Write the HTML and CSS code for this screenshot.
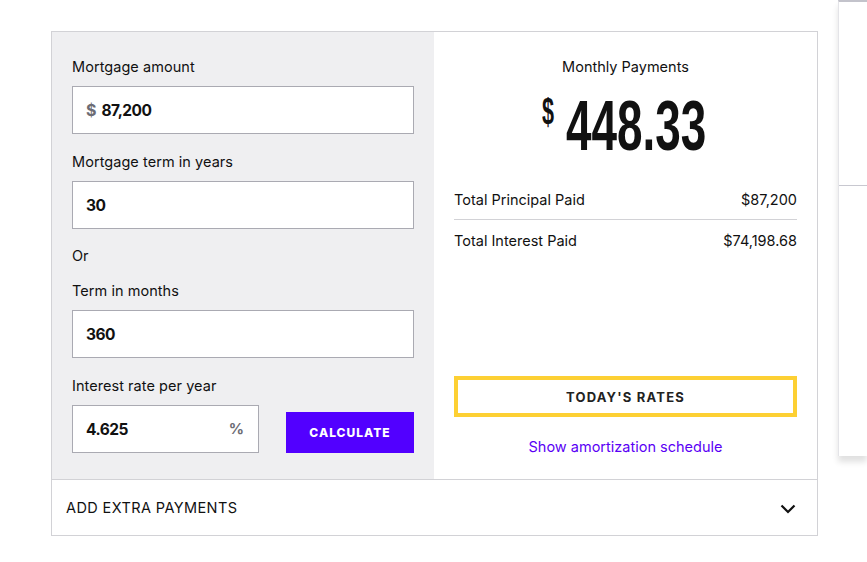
FILE: index.html
```html
<!DOCTYPE html>
<html>
<head>
<meta charset="utf-8">
<link rel="stylesheet" href="styles.css">
</head>
<body>
<div class="page">
  <div class="calc">
    <div class="calc-main">
      <div class="inputs">
        <label class="lbl">Mortgage amount</label>
        <div class="field"><span class="prefix">$</span><span class="val">87,200</span></div>
        <label class="lbl">Mortgage term in years</label>
        <div class="field"><span class="val">30</span></div>
        <div class="or">Or</div>
        <label class="lbl">Term in months</label>
        <div class="field"><span class="val">360</span></div>
        <label class="lbl">Interest rate per year</label>
        <div class="rate-row">
          <div class="field rate"><span class="val">4.625</span><span class="suffix">%</span></div>
          <button class="btn-calc">CALCULATE</button>
        </div>
      </div>
      <div class="results">
        <div class="mp-title">Monthly Payments</div>
        <div class="mp-amount"><span class="cur">$</span><span class="num">448.33</span></div>
        <div class="row"><span>Total Principal Paid</span><span>$87,200</span></div>
        <div class="row last"><span>Total Interest Paid</span><span>$74,198.68</span></div>
        <div class="spacer"></div>
        <button class="btn-rates">TODAY'S RATES</button>
        <a class="amort">Show amortization schedule</a>
      </div>
    </div>
    <div class="extra">
      <span>ADD EXTRA PAYMENTS</span>
      <svg class="chev" width="16" height="10" viewBox="0 0 16 10"><path d="M1.5 1.5 L8 8 L14.5 1.5" fill="none" stroke="#111" stroke-width="2.2"/></svg>
    </div>
  </div>
  <div class="side">
    <div class="side-top"></div>
    <div class="side-bottom"></div>
  </div>
</div>
</body>
</html>
```

FILE: styles.css
```css
* { box-sizing: border-box; }
html, body { margin: 0; padding: 0; background: #fff; }
body {
  font-family: "Inter", "Liberation Sans", sans-serif;
  color: #111;
  overflow: hidden;
  width: 867px;
  height: 562px;
}
.page {
  display: flex;
  align-items: flex-start;
  padding: 31px 0 0 51px;
}
.calc {
  width: 767px;
  flex: none;
  border: 1px solid #d2d2d6;
}
.calc-main {
  display: flex;
}
.inputs {
  width: 382px;
  background: #efeff1;
  padding: 25px 20px 26px 20px;
  display: flex;
  flex-direction: column;
}
.lbl {
  font-size: 14.5px;
  line-height: 20px;
  height: 20px;
  margin-bottom: 9px;
  letter-spacing: 0.05px;
}
.field {
  height: 48px;
  background: #fff;
  border: 1px solid #aaaab2;
  display: flex;
  align-items: center;
  padding: 0 13px;
  margin-bottom: 18px;
}
.prefix {
  color: #6c6c74;
  font-weight: 700;
  font-size: 16px;
  margin-right: 5px;
}
.val {
  font-weight: 700;
  font-size: 15.5px;
  letter-spacing: -0.5px;
}
.or {
  font-size: 14.5px;
  line-height: 20px;
  margin-top: -1px;
  margin-bottom: 15px;
}
.rate-row {
  display: flex;
  align-items: flex-end;
  justify-content: space-between;
}
.field.rate {
  width: 187px;
  margin-bottom: 0;
  justify-content: space-between;
}
.suffix {
  color: #6c6c74;
  font-weight: 700;
  font-size: 15px;
  margin-top: -2px;
  margin-right: 1px;
}
.btn-calc {
  width: 128px;
  height: 41px;
  background: #5200ff;
  border: none;
  color: #fff;
  font-family: inherit;
  font-weight: 800;
  font-size: 12px;
  letter-spacing: 1px;
  padding: 0;
}
.results {
  width: 383px;
  padding: 25px 20px 22px 20px;
  display: flex;
  flex-direction: column;
}
.mp-title {
  text-align: center;
  font-size: 14.5px;
  line-height: 20px;
}
.mp-amount {
  display: flex;
  justify-content: center;
  align-items: flex-start;
  height: 103px;
  padding-top: 16px;
  padding-right: 3px;
}
.cur {
  font-family: "Liberation Sans", sans-serif;
  font-weight: 700;
  font-size: 36px;
  line-height: 40px;
  display: inline-block;
  width: 12px;
  transform: scaleX(0.6);
  transform-origin: left center;
  margin-right: 12px;
  margin-top: -1px;
}
.num {
  font-family: "Liberation Sans", sans-serif;
  font-weight: 700;
  font-size: 70px;
  line-height: 66px;
  display: inline-block;
  transform: scaleX(0.655);
  transform-origin: left center;
  width: 141px;
  white-space: nowrap;
  letter-spacing: 0;
}
.row {
  display: flex;
  justify-content: space-between;
  font-size: 14.5px;
  line-height: 20px;
  padding: 10px 0 9px;
  border-bottom: 1px solid #d2d2d6;
}
.row.last {
  border-bottom: none;
  padding-top: 11px;
}
.spacer { flex: 1; }
.btn-rates {
  height: 41px;
  background: #fff;
  border: 4px solid #fdd033;
  font-family: inherit;
  font-weight: 700;
  font-size: 13px;
  letter-spacing: 1.2px;
  color: #222;
  padding: 0;
}
.amort {
  text-align: center;
  color: #5a00f5;
  font-size: 14.5px;
  line-height: 20px;
  margin-top: 20px;
}
.extra {
  height: 56px;
  border-top: 1px solid #d2d2d6;
  display: flex;
  align-items: center;
  justify-content: space-between;
  padding: 0 21px 0 14px;
  font-size: 14.5px;
  letter-spacing: 0.4px;
}
.chev { margin-top: 2px; }
.side {
  margin-left: 20px;
  margin-top: -31px;
  flex: 1;
  height: 456px;
  border-left: 1px solid #e4e4e8;
  border-top: 2px solid #c3c3cb;
  box-shadow: 0 6px 6px rgba(0,0,0,0.12);
  display: flex;
  flex-direction: column;
}
.side-top { height: 184px; border-bottom: 1px solid #c8c8d0; }
.side-bottom { flex: 1; }
```
